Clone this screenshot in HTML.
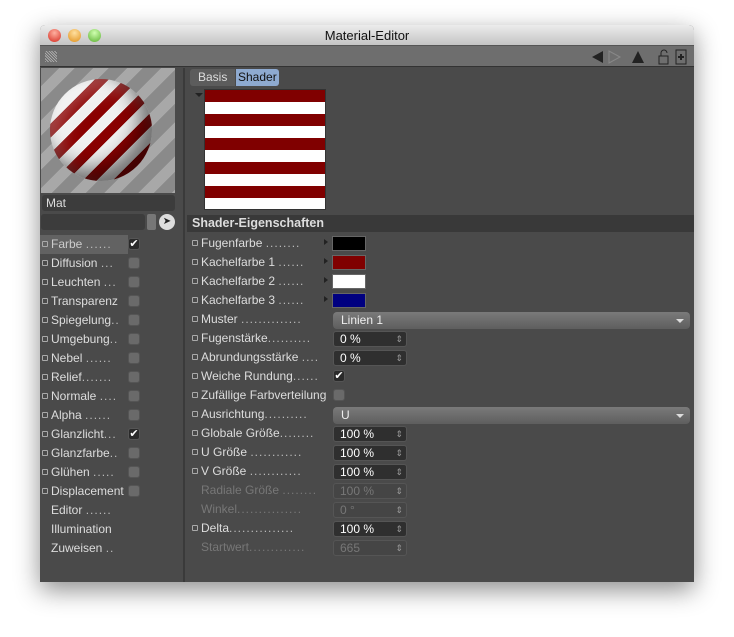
<!DOCTYPE html>
<html><head><meta charset="utf-8"><style>
*{margin:0;padding:0;box-sizing:border-box}
body{width:734px;height:637px;background:#fff;font-family:"Liberation Sans",sans-serif;font-size:12px;color:#ddd;position:relative;overflow:hidden}
.win{position:absolute;left:40px;top:25px;width:654px;height:557px;background:#4a4a4a;box-shadow:0 8px 25px rgba(0,0,0,.45);border-radius:5px 5px 0 0;overflow:hidden}
.title{height:21px;background:linear-gradient(#ececec,#c4c4c4);color:#111;font-size:13px;text-align:center;line-height:22px;border-bottom:1px solid #555;position:relative}
.dot{position:absolute;top:4px;width:13px;height:13px;border-radius:50%}
.tool{height:21px;background:#6e6e6e;border-bottom:1px solid #333;position:relative}
.left{position:absolute;left:0;top:43px;width:145px;bottom:0;border-right:2px solid #3a3a3a}
.row{position:absolute;height:19px;line-height:19px;white-space:nowrap}
.sq{display:inline-block;width:6px;height:6px;border:1px solid #aaa;border-radius:1px;margin-right:3px;vertical-align:1px}
.cb{position:absolute;width:12px;height:12px;border-radius:3px;background:#6a6a6a;border:1px solid #555}
.dots{color:#bbb;letter-spacing:1px}
.fld{position:absolute;height:16px;background:#2f2f2f;border-radius:3px;border:1px solid #555;padding-left:6px;line-height:15px;color:#fff}
.fld:after{content:"⇕";position:absolute;right:3px;top:0;font-size:9px;color:#999}
.dis{background:#454545;color:#777}
.dd{position:absolute;left:293px;width:357px;height:17px;border-radius:4px;background:linear-gradient(#7a7a7a,#5e5e5e);padding-left:8px;line-height:17px;color:#eee}
.dd:after{content:"";position:absolute;right:6px;top:7px;border:4px solid transparent;border-top:4px solid #ddd}
.sw{position:absolute;left:292px;width:34px;height:15px;border:1px solid #666}
.arr{position:absolute;left:284px;width:0;height:0;border:3px solid transparent;border-left:4px solid #222}
</style></head><body>
<div class="win">
<div class="title">Material-Editor
<div class="dot" style="left:8px;background:radial-gradient(circle at 50% 30%,#ffb0a0,#d42b20)"></div>
<div class="dot" style="left:28px;background:radial-gradient(circle at 50% 30%,#ffe0a0,#e0901a)"></div>
<div class="dot" style="left:48px;background:radial-gradient(circle at 50% 30%,#d0ffb0,#5ab030)"></div>
</div>
<div class="tool">
<div style="position:absolute;left:5px;top:5px;width:12px;height:11px;background:repeating-linear-gradient(45deg,#aaa 0 1px,#666 1px 2px)"></div>
<svg style="position:absolute;left:550px;top:3px" width="100" height="16">
<polygon points="2,8 13,2 13,14" fill="#222"/>
<polygon points="30,8 19,2 19,14" fill="none" stroke="#888"/>
<polygon points="42,14 48,2 54,14" fill="#222"/>
<rect x="69" y="7" width="9" height="8" fill="none" stroke="#222"/><path d="M71 7V4a3 3 0 0 1 6 0" fill="none" stroke="#222"/>
<rect x="86" y="1" width="10" height="14" fill="none" stroke="#222"/><path d="M88 8h6M91 5v6" stroke="#222" stroke-width="2"/>
</svg>
</div>
<div class="left">
<div style="position:absolute;left:1px;top:0;width:134px;height:125px;background:repeating-linear-gradient(135deg,#8a8a8a 0 13px,#a8a8a8 13px 24px)">
<div style="position:absolute;left:9px;top:11px;width:102px;height:102px;border-radius:50%;background:repeating-linear-gradient(135deg,#f0f0f0 0 11px,#8a0000 11px 21px);box-shadow:inset -12px -12px 20px rgba(0,0,0,.55),inset 10px 10px 20px rgba(255,255,255,.3)"></div></div>
<div style="position:absolute;left:2px;top:127px;width:133px;height:16px;background:#3c3c3c;border-radius:3px;padding-left:4px;line-height:16px">Mat</div>
<div style="position:absolute;left:1px;top:146px;width:104px;height:16px;background:#3c3c3c;border-radius:3px"></div>
<div style="position:absolute;left:107px;top:146px;width:9px;height:16px;background:#777;border-radius:2px"></div>
<div style="position:absolute;left:119px;top:146px;width:16px;height:16px;border-radius:50%;background:#ddd;color:#222;font-size:10px;text-align:center;line-height:16px">➤</div>
<div style="position:absolute;left:0;top:167px;width:88px;height:19px;background:#626262"></div>
<div style="position:absolute;left:0;top:167px">
<div class="row" style="left:2px;top:0px"><span class="sq"></span><span style="color:#ccc">Farbe</span> <span class="dots">......</span></div><div class="cb" style="left:88px;top:3px;background:#2a2a2a;color:#fff;font-size:11px;line-height:10px;text-align:center">✔</div>
<div class="row" style="left:2px;top:19px"><span class="sq"></span>Diffusion <span class="dots">...</span></div><div class="cb" style="left:88px;top:22px"></div>
<div class="row" style="left:2px;top:38px"><span class="sq"></span>Leuchten <span class="dots">...</span></div><div class="cb" style="left:88px;top:41px"></div>
<div class="row" style="left:2px;top:57px"><span class="sq"></span>Transparenz</div><div class="cb" style="left:88px;top:60px"></div>
<div class="row" style="left:2px;top:76px"><span class="sq"></span>Spiegelung<span class="dots">..</span></div><div class="cb" style="left:88px;top:79px"></div>
<div class="row" style="left:2px;top:95px"><span class="sq"></span>Umgebung<span class="dots">..</span></div><div class="cb" style="left:88px;top:98px"></div>
<div class="row" style="left:2px;top:114px"><span class="sq"></span>Nebel <span class="dots">......</span></div><div class="cb" style="left:88px;top:117px"></div>
<div class="row" style="left:2px;top:133px"><span class="sq"></span>Relief<span class="dots">.......</span></div><div class="cb" style="left:88px;top:136px"></div>
<div class="row" style="left:2px;top:152px"><span class="sq"></span>Normale <span class="dots">....</span></div><div class="cb" style="left:88px;top:155px"></div>
<div class="row" style="left:2px;top:171px"><span class="sq"></span>Alpha <span class="dots">......</span></div><div class="cb" style="left:88px;top:174px"></div>
<div class="row" style="left:2px;top:190px"><span class="sq"></span>Glanzlicht<span class="dots">...</span></div><div class="cb" style="left:88px;top:193px;background:#2a2a2a;color:#fff;font-size:11px;line-height:10px;text-align:center">✔</div>
<div class="row" style="left:2px;top:209px"><span class="sq"></span>Glanzfarbe<span class="dots">..</span></div><div class="cb" style="left:88px;top:212px"></div>
<div class="row" style="left:2px;top:228px"><span class="sq"></span>Glühen <span class="dots">.....</span></div><div class="cb" style="left:88px;top:231px"></div>
<div class="row" style="left:2px;top:247px"><span class="sq"></span>Displacement</div><div class="cb" style="left:88px;top:250px"></div>
<div class="row" style="left:11px;top:266px">Editor <span class="dots">......</span></div>
<div class="row" style="left:11px;top:285px">Illumination</div>
<div class="row" style="left:11px;top:304px">Zuweisen <span class="dots">..</span></div>
</div>
</div>
<div style="position:absolute;left:150px;top:44px;width:45px;height:17px;background:#5c5c5c;border-radius:3px 0 0 3px;line-height:17px;padding-left:8px;color:#ddd">Basis</div>
<div style="position:absolute;left:196px;top:44px;width:43px;height:17px;background:#8eaad0;border-radius:0 3px 3px 0;line-height:17px;padding-left:2px;color:#111">Shader</div>
<div style="position:absolute;left:155px;top:68px;border:4px solid transparent;border-top:4px solid #222"></div>
<div style="position:absolute;left:164px;top:64px;width:122px;height:121px;border:1px solid #333;background:repeating-linear-gradient(#800000 0 12px,#fff 12px 24px)"></div>
<div style="position:absolute;left:147px;top:190px;width:507px;height:17px;background:#393939;font-weight:bold;line-height:17px;padding-left:5px;color:#ddd;font-size:12.5px">Shader-Eigenschaften</div>
<div style="position:absolute;left:150px;top:209px;right:0">
<div class="row" style="top:0;left:2px"><span class="sq"></span>Fugenfarbe <span class="dots">........</span></div><div class="arr" style="top:5px;left:134px"></div><div class="sw" style="top:2px;left:142px;background:#000"></div>
<div class="row" style="top:19px;left:2px"><span class="sq"></span>Kachelfarbe 1 <span class="dots">......</span></div><div class="arr" style="top:24px;left:134px"></div><div class="sw" style="top:21px;left:142px;background:#800000"></div>
<div class="row" style="top:38px;left:2px"><span class="sq"></span>Kachelfarbe 2 <span class="dots">......</span></div><div class="arr" style="top:43px;left:134px"></div><div class="sw" style="top:40px;left:142px;background:#fff"></div>
<div class="row" style="top:57px;left:2px"><span class="sq"></span>Kachelfarbe 3 <span class="dots">......</span></div><div class="arr" style="top:62px;left:134px"></div><div class="sw" style="top:59px;left:142px;background:#000080"></div>
<div class="row" style="top:76px;left:2px"><span class="sq"></span>Muster <span class="dots">..............</span></div><div class="dd" style="top:78px;left:143px;width:357px">Linien 1</div>
<div class="row" style="top:95px;left:2px"><span class="sq"></span>Fugenstärke<span class="dots">..........</span></div><div class="fld" style="top:97px;left:143px;width:74px">0 %</div>
<div class="row" style="top:114px;left:2px"><span class="sq"></span>Abrundungsstärke <span class="dots">....</span></div><div class="fld" style="top:116px;left:143px;width:74px">0 %</div>
<div class="row" style="top:133px;left:2px"><span class="sq"></span>Weiche Rundung<span class="dots">......</span></div><div class="cb" style="left:143px;top:136px;background:#2a2a2a;color:#fff;font-size:11px;line-height:10px;text-align:center">✔</div>
<div class="row" style="top:152px;left:2px"><span class="sq"></span>Zufällige Farbverteilung</div><div class="cb" style="left:143px;top:155px"></div>
<div class="row" style="top:171px;left:2px"><span class="sq"></span>Ausrichtung<span class="dots">..........</span></div><div class="dd" style="top:173px;left:143px;width:357px">U</div>
<div class="row" style="top:190px;left:2px"><span class="sq"></span>Globale Größe<span class="dots">........</span></div><div class="fld" style="top:192px;left:143px;width:74px">100 %</div>
<div class="row" style="top:209px;left:2px"><span class="sq"></span>U Größe <span class="dots">............</span></div><div class="fld" style="top:211px;left:143px;width:74px">100 %</div>
<div class="row" style="top:228px;left:2px"><span class="sq"></span>V Größe <span class="dots">............</span></div><div class="fld" style="top:230px;left:143px;width:74px">100 %</div>
<div class="row" style="top:247px;left:11px;color:#777">Radiale Größe <span class="dots" style="color:#777">........</span></div><div class="fld dis" style="top:249px;left:143px;width:74px">100 %</div>
<div class="row" style="top:266px;left:11px;color:#777">Winkel<span class="dots" style="color:#777">...............</span></div><div class="fld dis" style="top:268px;left:143px;width:74px">0 °</div>
<div class="row" style="top:285px;left:2px"><span class="sq"></span>Delta<span class="dots">...............</span></div><div class="fld" style="top:287px;left:143px;width:74px">100 %</div>
<div class="row" style="top:304px;left:11px;color:#777">Startwert<span class="dots" style="color:#777">.............</span></div><div class="fld dis" style="top:306px;left:143px;width:74px">665</div>
</div>
</div>
</body></html>
